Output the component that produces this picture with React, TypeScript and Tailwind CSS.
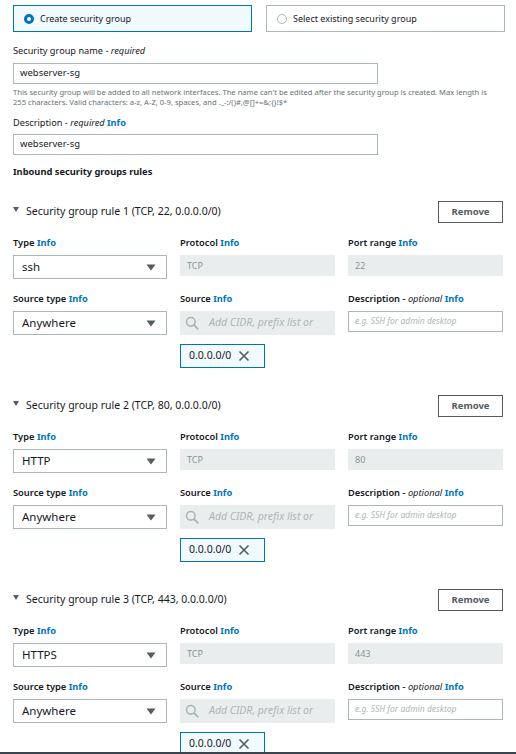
import React from "react";

const Info = () => <span className="font-bold text-[#0073bb]"> Info</span>;

const Caret = () => (
  <svg width="10" height="7" viewBox="0 0 10 7" className="shrink-0">
    <path d="M0.5 0.5 H9.5 L5 6.5 Z" fill="#545b64" />
  </svg>
);

const Select = ({ value }: { value: string }) => (
  <div className="flex h-[24px] items-center justify-between border border-[#aab7b8] bg-white pl-[8px] pr-[10px] text-[11.5px] text-[#16191f]">
    <span>{value}</span>
    <Caret />
  </div>
);

const Disabled = ({ value }: { value: string }) => (
  <div className="flex h-[21px] items-center bg-[#eaeded] px-[7px] text-[9px] text-[#879596]">{value}</div>
);

const Label = ({ children }: { children: React.ReactNode }) => (
  <div className="mb-[6px] h-[12px] text-[9.3px] leading-[12px] font-semibold text-[#16191f]">{children}</div>
);

const Rule = ({ n, port, type }: { n: number; port: string; type: string }) => (
  <div className="flex flex-col">
    <div className="flex h-[22px] items-center justify-between">
      <div className="flex items-center">
        <svg width="6" height="5" viewBox="0 0 6 5" className="mr-[7px] -mt-[6px]">
          <path d="M0 0 H6 L3 5 Z" fill="#545b64" />
        </svg>
        <span className="text-[10.5px] text-[#16191f]">
          Security group rule {n} (TCP, {port}, 0.0.0.0/0)
        </span>
      </div>
      <button className="mr-[13px] flex h-[22px] w-[65px] items-center justify-center border border-[#545b64] bg-white text-[9.5px] font-bold text-[#545b64]">
        Remove
      </button>
    </div>
    <div className="mt-[14px] grid grid-cols-[154px_155px_155px] gap-x-[13px]">
      <div>
        <Label>
          Type<Info />
        </Label>
        <Select value={type} />
      </div>
      <div>
        <Label>
          Protocol<Info />
        </Label>
        <Disabled value="TCP" />
      </div>
      <div>
        <Label>
          Port range<Info />
        </Label>
        <Disabled value={port} />
      </div>
    </div>
    <div className="mt-[14px] grid grid-cols-[154px_155px_155px] gap-x-[13px]">
      <div>
        <Label>
          Source type<Info />
        </Label>
        <Select value="Anywhere" />
      </div>
      <div>
        <Label>
          Source<Info />
        </Label>
        <div className="flex h-[24px] items-center overflow-hidden whitespace-nowrap bg-[#eaeded] pl-[5px] text-[10.5px] italic text-[#aab7b8]">
          <svg width="14" height="14" viewBox="0 0 14 14" className="mr-[10px] shrink-0">
            <circle cx="5.8" cy="5.8" r="4.3" fill="none" stroke="#aab7b8" strokeWidth="1.6" />
            <path d="M9 9 L12.8 12.8" stroke="#aab7b8" strokeWidth="1.8" strokeLinecap="round" />
          </svg>
          Add CIDR, prefix list or
        </div>
        <div className="mt-[9px] flex h-[24px] w-[85px] items-center border border-[#0073bb] bg-[#f1faff] pl-[8px] text-[10.5px] text-[#16191f]">
          <span>0.0.0.0/0</span>
          <svg width="12" height="12" viewBox="0 0 12 12" className="ml-[7px]">
            <path d="M1.5 1.5 L10.5 10.5 M10.5 1.5 L1.5 10.5" stroke="#545b64" strokeWidth="1.6" />
          </svg>
        </div>
      </div>
      <div>
        <Label>
          Description - <span className="italic font-normal">optional</span>
          <Info />
        </Label>
        <div className="flex h-[21px] items-center border border-[#aab7b8] bg-white px-[6px] text-[8.5px] italic text-[#aab7b8]">
          e.g. SSH for admin desktop
        </div>
      </div>
    </div>
  </div>
);

export default function App() {
  return (
    <div
      className="flex h-[754px] w-[516px] flex-col overflow-hidden bg-white"
      style={{ fontFamily: '"Noto Sans", "Open Sans", sans-serif' }}
    >
      <div className="flex-1 overflow-hidden pl-[13px] pt-[5px]">
        <div className="flex gap-[14px]">
          <div className="flex h-[27px] w-[239px] items-center border border-[#0073bb] bg-[#f1faff] pl-[10px] text-[9px] text-[#16191f]">
            <span className="mr-[6px] inline-block h-[10px] w-[10px] rounded-full border-[3px] border-[#0073bb] bg-white" />
            Create security group
          </div>
          <div className="flex h-[27px] w-[239px] items-center border border-[#aab7b8] bg-white pl-[10px] text-[9px] text-[#16191f]">
            <span className="mr-[6px] inline-block h-[10px] w-[10px] rounded-full border border-[#aab7b8] bg-white" />
            Select existing security group
          </div>
        </div>

        <div className="mt-[13px] text-[9.2px] leading-[12px] text-[#16191f]">
          Security group name - <span className="italic">required</span>
        </div>
        <div className="mt-[6px] flex h-[21px] w-[365px] items-center border border-[#aab7b8] pl-[6px] text-[9.5px] text-[#16191f]">
          webserver-sg
        </div>
        <div className="mt-[3px] w-[492px] whitespace-nowrap text-[7.6px] leading-[10px] text-[#687078]">
          This security group will be added to all network interfaces. The name can't be edited after the security group is created. Max length is
          <br />
          255 characters. Valid characters: a-z, A-Z, 0-9, spaces, and ._-:/()#,@[]+=&amp;;{"{}"}!$*
        </div>

        <div className="mt-[10px] text-[9.2px] leading-[12px] text-[#16191f]">
          Description - <span className="italic">required</span>
          <Info />
        </div>
        <div className="mt-[5px] flex h-[21px] w-[365px] items-center border border-[#aab7b8] pl-[6px] text-[9.5px] text-[#16191f]">
          webserver-sg
        </div>

        <div className="mt-[11px] text-[9.3px] leading-[12px] font-bold text-[#16191f]">
          Inbound security groups rules
        </div>

        <div className="mt-[23px] flex flex-col gap-[27px]">
          <Rule n={1} port="22" type="ssh" />
          <Rule n={2} port="80" type="HTTP" />
          <Rule n={3} port="443" type="HTTPS" />
        </div>
      </div>
      <div className="h-[2px] bg-[#3b434c]" />
    </div>
  );
}
